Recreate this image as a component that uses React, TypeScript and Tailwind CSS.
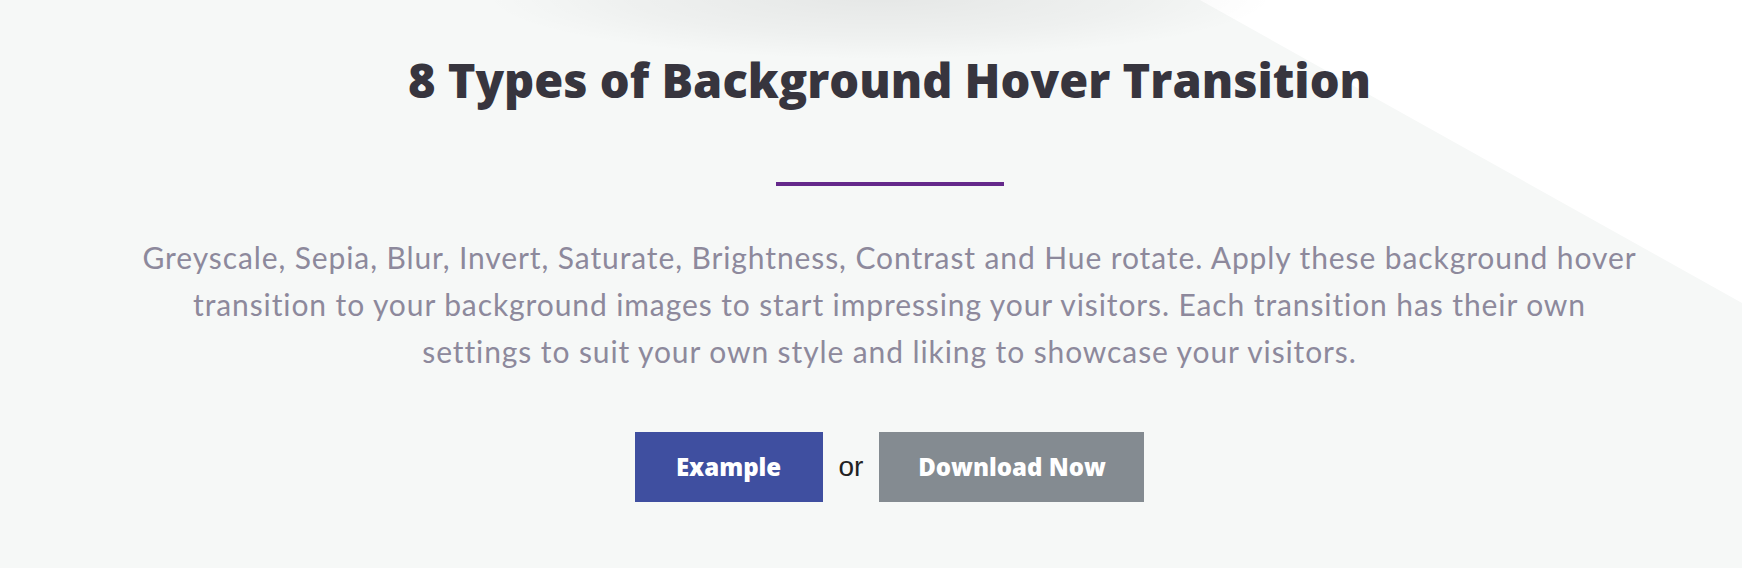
import React from "react";

export default function App() {
  return (
    <div className="relative w-full h-[568px] overflow-hidden bg-[#f6f8f7]">
      {/* white diagonal at the top right */}
      <div className="absolute inset-0 bg-white [clip-path:polygon(1200px_0,100%_0,100%_303px)]" />
      {/* soft shadow at the top centre */}
      <div className="absolute left-[480px] top-[-70px] w-[800px] h-[130px] rounded-[50%] bg-[radial-gradient(ellipse_at_center,rgba(0,0,0,0.07)_0%,rgba(0,0,0,0.03)_45%,rgba(0,0,0,0)_70%)]" />

      <div className="relative flex flex-col items-center pl-[37px] pt-[52px]">
        <h1 className="m-0 text-[47px] leading-[56px] font-extrabold text-[#37353e] [font-family:'Open_Sans',sans-serif]">
          8 Types of Background Hover Transition
        </h1>

        <div className="mt-[74px] w-[228px] h-[4px] bg-[#65298b]" />

        <p className="mt-[48px] max-w-[1510px] text-center text-[30px] leading-[47px] tracking-[0.9px] text-[#8d899c] [font-family:Lato,sans-serif]">
          Greyscale, Sepia, Blur, Invert, Saturate, Brightness, Contrast and Hue rotate. Apply these background hover
          transition to your background images to start impressing your visitors. Each transition has their own
          settings to suit your own style and liking to showcase your visitors.
        </p>

        <div className="mt-[57px] flex items-center gap-[16px]">
          <a className="flex items-center justify-center w-[188px] h-[70px] bg-[#3f4fa0] text-white text-[24px] font-extrabold [font-family:'Open_Sans',sans-serif]">
            Example
          </a>
          <span className="text-[28px] text-[#222222] [font-family:'Liberation_Sans',Arial,sans-serif]">or</span>
          <a className="flex items-center justify-center w-[265px] h-[70px] bg-[#848b91] text-white text-[24px] font-extrabold [font-family:'Open_Sans',sans-serif]">
            Download Now
          </a>
        </div>
      </div>
    </div>
  );
}
